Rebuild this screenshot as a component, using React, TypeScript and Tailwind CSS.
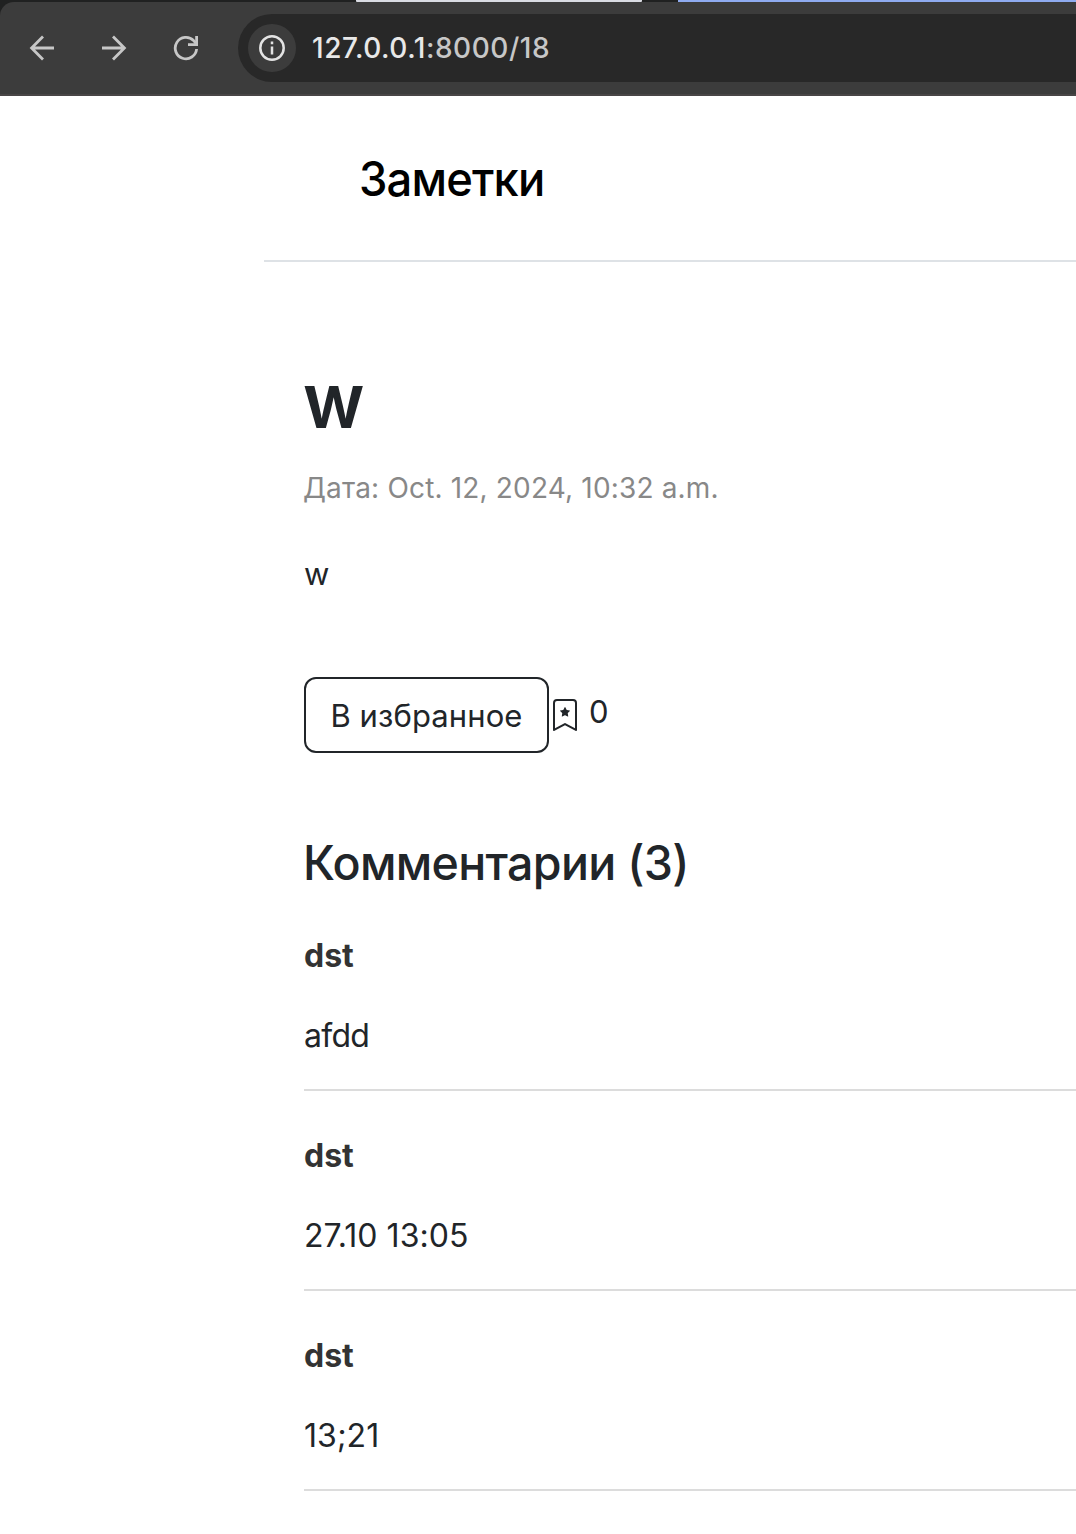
import { BsBookmarkStar } from "react-icons/bs";

const comments = [
  { author: "dst", text: "afdd", spacing: "tracking-[-0.7px]" },
  { author: "dst", text: "27.10 13:05", spacing: "tracking-[0.05px]" },
  { author: "dst", text: "13;21", spacing: "tracking-[0.05px]" },
];

function BrowserBar() {
  return (
    <div className="h-24 bg-[#202121]">
      <div className="flex h-[2px] items-stretch">
        <div className="ml-[356px] w-[286px] rounded-b-[1px] bg-[#dadce3]" />
        <div className="ml-9 grow bg-[#8fabf0]" />
      </div>
      <div className="flex h-[94px] items-center rounded-tl-[14px] border-b-2 border-[#484546] bg-[#3c3c3c]">
        <svg className="ml-[29px] size-[26px] shrink-0" viewBox="0 0 26 26" fill="none" stroke="#c7c7c7" strokeWidth="2.8">
          <path d="M25 13H3M14 1.6 2.6 13 14 24.4" />
        </svg>
        <svg className="ml-[46px] size-[26px] shrink-0" viewBox="0 0 26 26" fill="none" stroke="#c7c7c7" strokeWidth="2.8">
          <path d="M1 13h22M12 1.6 23.4 13 12 24.4" />
        </svg>
        <svg className="ml-[46px] size-[26px] shrink-0" viewBox="0 0 26 26" fill="none" stroke="#c7c7c7" strokeWidth="2.8">
          <path d="M23.6 14A10.7 10.7 0 1 1 20.6 5.6L23 8.2" />
          <path d="M23.6 1v8.6H15" />
        </svg>
        <div className="ml-[39px] flex h-[68px] grow items-center rounded-l-full bg-[#282828] pl-[10px]">
          <div className="flex size-12 items-center justify-center rounded-full bg-[#3c3c3c]">
            <svg className="size-[26px]" viewBox="0 0 26 26" fill="none" stroke="#e3e3e3" strokeWidth="2.5">
              <circle cx="13" cy="13" r="11.7" />
              <path d="M13 11.6v8M13 6.4v2.8" strokeWidth="2.5" />
            </svg>
          </div>
          <span className="ml-4 text-[28px] leading-8 font-medium tracking-[0.53px] text-[#c7c7c7]">
            <span className="text-[#e8e8e8]">127.0.0.1</span>:8000/18
          </span>
        </div>
      </div>
    </div>
  );
}

export default function App() {
  return (
    <div className="h-[1534px] w-[1076px] overflow-hidden bg-white font-['Inter',sans-serif] text-[#212529]">
      <BrowserBar />
      <header className="ml-[264px] flex h-[166px] items-center border-b-2 border-[#dee2e6] pt-[2px] pl-[95px]">
        <span className="origin-left scale-x-[0.945] text-[48px] leading-[72px] font-medium tracking-[-0.9px] text-black">Заметки</span>
      </header>
      <main className="ml-[304px] flex flex-col items-start">
        <h1 className="mt-[90px] -ml-px origin-left scale-x-[0.95] text-[77px] leading-[96px] font-semibold">w</h1>
        <p className="mt-4 -ml-px text-[28px] leading-[48px] tracking-[0.17px] text-[#888]">Дата: Oct. 12, 2024, 10:32 a.m.</p>
        <p className="mt-[38px] text-[31px] leading-[48px]">w</p>
        <div className="mt-[79px] flex">
          <button className="flex h-[76px] w-[245px] items-center justify-center rounded-xl border-2 border-[#212529] pt-0.5 text-[31px] tracking-[0.1px]">
            В избранное
          </button>
          <BsBookmarkStar className="mt-[22px] size-8" />
          <span className="mt-[11px] ml-2 text-[31px] leading-[48px]">0</span>
        </div>
        <h2 className="mt-[81px] -ml-px origin-left scale-x-[0.97] text-[48px] leading-[58px] font-medium tracking-[-0.7px]">Комментарии (3)</h2>
        <ul className="mt-10 w-full">
          {comments.map((c) => (
            <li key={c.text} className="mb-[41px] flex h-[159px] flex-col border-b-2 border-[#dcdcdc]">
              <span className="text-[32px] leading-[48px] font-bold text-[#333]">{c.author}</span>
              <span className={"mt-8 text-[32px] leading-[48px] " + c.spacing}>{c.text}</span>
            </li>
          ))}
        </ul>
      </main>
    </div>
  );
}
